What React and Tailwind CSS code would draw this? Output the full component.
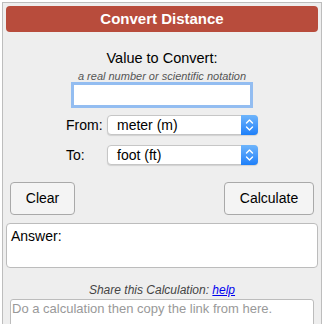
import React from "react";

const Chevrons = () => (
  <svg width="9" height="14" viewBox="0 0 9 14" fill="none">
    <path d="M1.5 5 L4.5 2 L7.5 5" stroke="white" strokeWidth="1.4" strokeLinecap="round" strokeLinejoin="round" />
    <path d="M1.5 9 L4.5 12 L7.5 9" stroke="white" strokeWidth="1.4" strokeLinecap="round" strokeLinejoin="round" />
  </svg>
);

const FakeSelect = ({ value }) => (
  <div className="flex h-[20px] w-[151px] items-stretch rounded-[4px] border border-[#c6c6c6] bg-white shadow-[0_1px_1px_rgba(0,0,0,0.12)]">
    <div className="flex flex-1 items-center pl-[9px] text-[14px] leading-none text-black">{value}</div>
    <div className="-my-px -mr-px flex w-[17px] items-center justify-center rounded-r-[4px] bg-gradient-to-b from-[#6db4fb] to-[#1b7ff9]">
      <Chevrons />
    </div>
  </div>
);

const App = () => {
  return (
    <div className="min-h-[324px] bg-white font-['Liberation_Sans',Arial,sans-serif]">
      <div className="ml-[2px] mt-[2px] h-[340px] w-[320px] border border-[#bdbdbd] bg-[#eeeeee] px-[3px] pt-[3px]">
        <div className="flex h-[26px] items-center justify-center rounded-[4px] bg-[#b84c3c] text-[15px] font-bold text-white">
          Convert Distance
        </div>

        <div className="mt-[18px] text-center text-[14.5px] leading-[16px] text-black">Value to Convert:</div>
        <div className="mt-[4px] text-center text-[11px] italic leading-[12px] text-[#555]">
          a real number or scientific notation
        </div>
        <div className="flex justify-center">
          <input
            type="text"
            className="h-[26px] w-[182px] border-[3px] border-[#93bdf1] bg-white px-1 text-[14px] outline-none"
          />
        </div>

        <div className="mt-[7px] flex justify-center">
          <div className="flex items-center">
            <span className="w-[41px] text-[14px] leading-[16px] text-black">From:</span>
            <FakeSelect value="meter (m)" />
          </div>
        </div>
        <div className="mt-[10px] flex justify-center">
          <div className="flex items-center">
            <span className="w-[41px] text-[14px] leading-[16px] text-black">To:</span>
            <FakeSelect value="foot (ft)" />
          </div>
        </div>

        <div className="mt-[17px] flex justify-between px-[4px]">
          <button className="h-[33px] w-[65px] rounded-[4px] border border-[#a9a9a9] bg-[#f4f4f4] text-[14px] text-black">
            Clear
          </button>
          <button className="h-[33px] w-[90px] rounded-[4px] border border-[#a9a9a9] bg-[#f4f4f4] text-[14px] text-black">
            Calculate
          </button>
        </div>

        <div className="mt-[8px] h-[45px] rounded-[4px] border border-[#bcbcbc] bg-white px-[4px] pt-[4px] text-[14px] leading-[16px] text-black">
          Answer:
        </div>

        <div className="mt-[15px] text-center text-[12px] italic leading-[14px] text-[#444]">
          Share this Calculation:{" "}
          <a href="#" className="text-[#0000ee] underline">
            help
          </a>
        </div>
        <div className="mx-[4px] mt-[2px]">
          <textarea
            readOnly
            placeholder="Do a calculation then copy the link from here."
            className="block h-[50px] w-full resize-none rounded-[3px] border border-[#bcbcbc] bg-white px-[1px] py-[1px] text-[13px] leading-[15px] text-black outline-none placeholder:text-[#999]"
          />
        </div>
      </div>
    </div>
  );
};

export default App;
